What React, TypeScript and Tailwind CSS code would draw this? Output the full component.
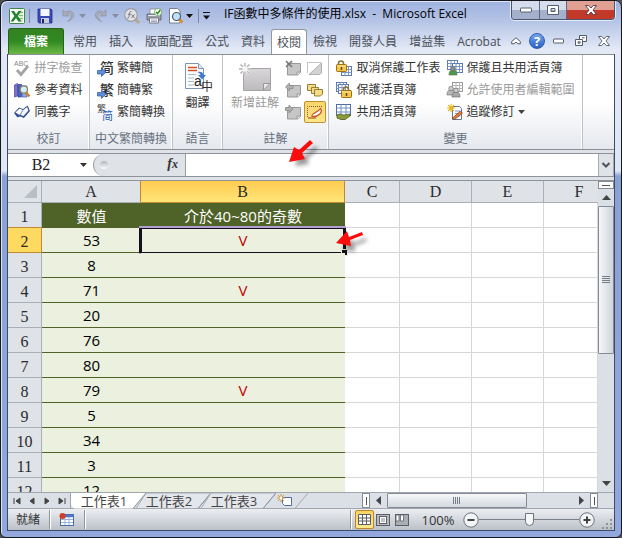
import React from "react";

type Kids = { children?: React.ReactNode };

const Svg = ({ w = 16, h = 16, children }: Kids & { w?: number; h?: number }) => (
  <svg width={w} height={h} viewBox={`0 0 ${w} ${h}`} className="block shrink-0 overflow-visible" aria-hidden="true">
    {children}
  </svg>
);

const Caret = ({ color = "#444" }: { color?: string }) => (
  <Svg w={7} h={4}>
    <path d="M0 0h7L3.5 4z" fill={color} />
  </Svg>
);

/* ---------- quick access icons ---------- */

const ExcelIcon = () => (
  <Svg>
    <rect x="0.5" y="0.5" width="15" height="15" rx="1" fill="#fff" stroke="#3a8a3c" />
    <rect x="9" y="2" width="5" height="12" fill="#dff0da" />
    <path d="M10 4.5h4M10 7.5h4M10 10.500h4" stroke="#7dbb77" />
    <path d="M2 3h3.200l2 3.200L9.500 3h3L8.700 8l4 5.500H9.300L7 9.900 4.500 13.500h-3L5.400 8z" fill="#23852b" />
  </Svg>
);
const SaveIcon = () => (
  <Svg>
    <path d="M1 1h13l1 1v13H2l-1-1z" fill="#3a49b8" stroke="#232f86" strokeWidth="0.8" />
    <rect x="3.500" y="1" width="9" height="7" fill="#f4f7ff" />
    <rect x="4" y="10" width="8" height="5" fill="#c7cce0" />
    <rect x="5" y="11" width="2" height="4" fill="#20264f" />
  </Svg>
);
const UndoIcon = () => (
  <Svg w={14} h={14}>
    <path d="M2 1v6h6L5.800 4.900C8.500 3.300 10.800 5 10 8c-.4 1.600-1.800 3-3.500 4.500C10.500 11 13 8.500 12.600 5.500 12 2 8 .8 4.200 3.300z" fill="#a9adb8" stroke="#8b90a0" strokeWidth="0.700" />
  </Svg>
);
const RedoIcon = () => (
  <Svg w={14} h={14}>
    <path d="M12 1v6H6l2.200-2.100C5.500 3.300 3.200 5 4 8c.4 1.600 1.800 3 3.500 4.500C3.500 11 1 8.500 1.400 5.500 2 2 6 .8 9.800 3.300z" fill="#a9adb8" stroke="#8b90a0" strokeWidth="0.700" />
  </Svg>
);
const FxLensIcon = () => (
  <Svg>
    <path d="M11 11l4 4" stroke="#b5a88e" strokeWidth="3" />
    <circle cx="7" cy="7" r="6.300" fill="#e3e3e6" stroke="#9a9ca4" strokeWidth="1.200" />
    <path d="M7.500 3.500C5.700 3 5.700 4.500 5.300 7S4.700 10.500 3.300 10M3.800 6.200h3M7.500 6.500l3 3.500M10.500 6.500l-3 3.500" stroke="#77797f" fill="none" />
  </Svg>
);
const PrinterIcon = () => (
  <Svg>
    <path d="M4 1h7v6H4z" fill="#fff" stroke="#888" strokeWidth="0.800" />
    <path d="M1 6h14v6H1z" fill="#9aa0ac" stroke="#555b66" strokeWidth="0.800" />
    <path d="M2 7.500h12" stroke="#e7eaf0" />
    <path d="M3.500 10h9v5h-9z" fill="#fff" stroke="#666" strokeWidth="0.800" />
    <path d="M5 12h6M5 13.500h6" stroke="#77a" strokeWidth="0.700" />
    <circle cx="12" cy="4" r="3.600" fill="#fff" stroke="#5a9c4a" strokeWidth="0.700" />
    <path d="M10 4l1.600 1.700L14.300 2" stroke="#2c8a1e" strokeWidth="1.500" fill="none" />
  </Svg>
);
const PreviewIcon = () => (
  <Svg>
    <path d="M1.500.5h8L12 3v12H1.500z" fill="#fff" stroke="#6c7686" strokeWidth="0.900" />
    <path d="M11 11l3.500 3.500" stroke="#d98f2b" strokeWidth="2.800" />
    <circle cx="8.500" cy="8.500" r="4" fill="#bfe0f6" stroke="#4c5a6c" strokeWidth="1.200" />
  </Svg>
);

/* ---------- shared ribbon shapes ---------- */

const GridShape = ({ x, y, gray }: { x: number; y: number; gray?: boolean }) => (
  <g transform={`translate(${x} ${y})`}>
    <rect x="0.500" y="0.500" width="10" height="9" fill="#fff" stroke={gray ? "#999" : "#5d7bb0"} />
    <path d="M.5 3.500h10M.5 6.500h10M4 .5v9M7.500.5v9" stroke={gray ? "#b5b5b5" : "#7c98c6"} />
  </g>
);
const LockShape = ({ x, y }: { x: number; y: number }) => (
  <g transform={`translate(${x} ${y})`}>
    <path d="M2.500 5V3.500a2.500 2.500 0 0 1 5 0V5" fill="none" stroke="#8c7434" strokeWidth="1.600" />
    <rect x="0.500" y="4.500" width="10" height="7" rx="0.800" fill="#f4c74b" stroke="#a07214" />
    <path d="M1.500 6h8" stroke="#fbe7a0" />
    <path d="M5.500 7v3" stroke="#6b4a08" strokeWidth="1.500" />
  </g>
);
const GrayNote = ({ children }: Kids) => (
  <Svg>
    <path d="M2.500 3.500h13v9l-3 2.500h-10z" fill="#c6c6c6" stroke="#999" />
    <path d="M12 15v-3h3.500" fill="#eee" stroke="#999" />
    {children}
  </Svg>
);

const SpellIcon = () => (
  <Svg>
    <text x="0" y="6" fontSize="7" fontFamily="Liberation Sans" fill="#888">ABC</text>
    <path d="M3 10l4 4.500L14 6" stroke="#a4a4a4" strokeWidth="2.800" fill="none" />
  </Svg>
);
const ResearchIcon = () => (
  <Svg>
    <path d="M.5 3l3-1.500V14L.5 15z" fill="#7d73cf" stroke="#4a439c" strokeWidth="0.700" />
    <path d="M4 2.500h3.500V15H4z" fill="#4b63c2" stroke="#2f3f92" strokeWidth="0.700" />
    <path d="M8 4h5v11H8z" fill="#8fa9e0" stroke="#4a62a8" strokeWidth="0.700" />
    <path d="M12 10.500l3.500 4" stroke="#c98324" strokeWidth="2.400" />
    <circle cx="9.800" cy="7.500" r="3.700" fill="#d3f0f8" stroke="#8a7b52" strokeWidth="1.200" />
  </Svg>
);
const BookIcon = () => (
  <Svg>
    <path d="M.5 9L5 4l4 1.500L13.500 2 15.500 7 10 13.500 6 12l-2.500 1z" fill="#33549c" stroke="#1f3668" strokeWidth="0.700" />
    <path d="M1.500 8.500L5.500 4.500l3.200 1.400L5.500 11z" fill="#fff" />
    <path d="M9.200 6l4-3 1.200 3.500L9.500 12l-3-1z" fill="#f2f6ff" />
    <path d="M9 6l-3 5" stroke="#8fa4cc" />
  </Svg>
);
const HanIcon = ({ kind }: { kind: "a" | "b" | "c" }) => (
  <Svg w={17} h={17}>
    {kind === "c" ? (
      <g fontFamily="Noto Sans CJK TC">
        <text x="0" y="8" fontSize="9" fill="#444">繁</text>
        <text x="5" y="16" fontSize="11" fill="#2c5fb4">简</text>
      </g>
    ) : (
      <g>
        <text x="3" y="13" fontSize="14" fontWeight="500" fontFamily="Noto Sans CJK TC" fill="#333">{kind === "a" ? "简" : "繁"}</text>
        <path d="M.5 10.500h4V8l4.500 4.200-4.500 4.300V14h-4z" fill="#5d8fdc" stroke="#2b55a2" strokeWidth="0.700" />
      </g>
    )}
  </Svg>
);
const TranslateIcon = () => (
  <Svg w={26} h={32}>
    <path d="M.5 2.500h13l5 5v20H.5z" fill="#fbfdff" stroke="#7e94b8" />
    <path d="M13.500 2.500v5h5" fill="#dbe6f5" stroke="#7e94b8" />
    <path d="M3 6.500h9M3 9.500h9" stroke="#d8501c" strokeWidth="1.500" />
    <path d="M3 13.500h8M3 17h6M3 20.500h6M3 24h6" stroke="#a5b8d6" />
    <path d="M12 11c4-1 6 0 6.500 3H21l-3.800 4.500L13 14h2.500c-.3-1.500-1.500-2.200-3.500-3z" fill="#3f79cf" />
    <text x="9" y="25" fontSize="14" fontFamily="Liberation Sans" fill="#222">a</text>
    <text x="16" y="30" fontSize="12" fontFamily="Noto Sans CJK TC" fill="#333">中</text>
  </Svg>
);
const NewNoteIcon = () => (
  <Svg w={32} h={28}>
    <defs>
      <linearGradient id="note" x1="0" y1="0" x2="0" y2="1">
        <stop offset="0" stopColor="#d9d7da" />
        <stop offset="1" stopColor="#bdbabe" />
      </linearGradient>
    </defs>
    <path d="M4.500 5.500h27v22h-27z" fill="url(#note)" stroke="#a5a3a6" />
    <path d="M24.500 27v-6.500h6.500z" fill="#e9e9ea" stroke="#98989b" />
    <path d="M6 0v12M0 6h12M1.500 1.500l9 9M10.500 1.500l-9 9" stroke="#f6f6f6" strokeWidth="2.600" />
    <path d="M6 0v3.500M6 8.500V12M0 6h3.500M8.500 6H12M1.500 1.500l2.300 2.300M8.200 8.200l2.300 2.300M10.500 1.500L8.200 3.800M3.800 8.200l-2.300 2.300" stroke="#b4b4b4" strokeWidth="1.400" />
  </Svg>
);
const DeleteNote = () => (
  <GrayNote>
    <path d="M1 1l6 6M7 1L1 7" stroke="#777" strokeWidth="1.700" />
  </GrayNote>
);
const PrevNote = () => (
  <GrayNote>
    <path d="M8 3.500H4.500V1L.5 5l4 4V6.500H8z" fill="#b0b0b0" stroke="#888" strokeWidth="0.800" />
  </GrayNote>
);
const NextNote = () => (
  <GrayNote>
    <path d="M.5 3.500H4V1l4 4-4 4V6.500H.5z" fill="#b0b0b0" stroke="#888" strokeWidth="0.800" />
  </GrayNote>
);
const ToggleNote = () => (
  <Svg>
    <path d="M.5 12.500v-10h13" fill="none" stroke="#888" strokeDasharray="1 1" />
    <path d="M14.500 3v10l-2 1.500H2z" fill="#d3d3d3" stroke="#a2a2a2" strokeWidth="0.800" />
  </Svg>
);
const AllNotes = () => (
  <Svg>
    <g fill="#f3dc8c" stroke="#8e7320" strokeWidth="0.900">
      <path d="M.5 2.500h8v4l-2 2h-6z" />
      <path d="M4.500 5.500h7v4l-2 2h-5z" />
      <path d="M7.500 7.500h8v4.500l-2 2h-6z" />
    </g>
  </Svg>
);
const InkIcon = () => (
  <Svg>
    <path d="M.5 13V2.500h15" fill="none" stroke="#7a6330" strokeDasharray="1 1" />
    <path d="M5 12.500c-1-3 6-4 8.500-8C16 8 12 13 5 12.500z" fill="#fff" stroke="#c9502a" strokeWidth="1.200" />
    <path d="M1 14h8" stroke="#8c4a20" />
  </Svg>
);
const UnprotectIcon = () => (
  <Svg>
    <GridShape x={5} y={6} />
    <LockShape x={0} y={0} />
  </Svg>
);
const ProtectBookIcon = () => (
  <Svg>
    <GridShape x={0} y={0} />
    <GridShape x={2} y={2} />
    <LockShape x={5} y={4} />
  </Svg>
);
const ShareBookIcon = () => (
  <Svg>
    <rect x="0.500" y="0.500" width="14" height="11" fill="#fff" stroke="#4b6da5" />
    <path d="M.5 4h14M.5 8h14M5 .5v11M10 .5v11" stroke="#6f8fc3" />
    <path d="M1 11c3-2 5 0 7 0l6-1v2l-5 3.500H5L1 14z" fill="#8a9c3c" stroke="#4b5c18" strokeWidth="0.800" />
  </Svg>
);
const PersonShape = ({ x, y, c }: { x: number; y: number; c: string }) => (
  <g transform={`translate(${x} ${y})`}>
    <path d="M0 9c0-4 1.500-5 4-5s4 1 4 5z" fill={c} stroke="#666" strokeWidth="0.600" />
    <circle cx="4" cy="2.500" r="2.300" fill={c === "#4a9a3f" ? "#8d8d8d" : "#ccc"} stroke="#666" strokeWidth="0.600" />
  </g>
);
const ProtectShareIcon = () => (
  <Svg>
    <GridShape x={0} y={0} />
    <GridShape x={5} y={3} />
    <PersonShape x={2} y={6} c="#4a9a3f" />
  </Svg>
);
const AllowUsersIcon = () => (
  <Svg>
    <GridShape x={5} y={0} gray />
    <PersonShape x={0} y={4} c="#b9b9b9" />
    <PersonShape x={5} y={6} c="#a8a8a8" />
  </Svg>
);
const TrackIcon = () => (
  <Svg>
    <path d="M5.500 2.500h7l2 2v11h-9z" fill="#fff" stroke="#5f78a6" />
    <path d="M8 7h5M8 9.500h5M8 12h5" stroke="#7c98d0" />
    <path d="M4 0v8M0 4h8M1 1l6 6M7 1L1 7" stroke="#e6b820" strokeWidth="1.100" />
    <path d="M5 14.500L13.500 7l2 2.200L7.500 15.500z" fill="#e27a38" stroke="#7c3d14" strokeWidth="0.700" />
  </Svg>
);

/* ---------- ribbon building blocks ---------- */

const Cmd = ({ icon, label, off, menu }: { icon: React.ReactNode; label: string; off?: boolean; menu?: boolean }) => (
  <button
    type="button"
    disabled={off}
    className={`flex h-[22px] items-center gap-[3px] whitespace-nowrap text-xs leading-[22px] ${off ? "text-[#9a9a9a]" : "text-[#333]"}`}
  >
    <span className="flex w-[17px] shrink-0">{icon}</span>
    {label}
    {menu && <Caret />}
  </button>
);

const Group = ({ title, width, children }: Kids & { title: string; width: string }) => (
  <section
    aria-label={title}
    className={`flex shrink-0 flex-col border-r border-[#bfc3c9] pt-[2px] shadow-[inset_-1px_0_0_#fff] ${width}`}
  >
    <div className="flex h-[72px] justify-center">{children}</div>
    <h2 className="text-center text-xs leading-[20px] text-[#66707e]">{title}</h2>
  </section>
);

const Col = ({ children }: Kids) => <div className="flex flex-col items-start">{children}</div>;

const tabs = ["常用", "插入", "版面配置", "公式", "資料", "校閱", "檢視", "開發人員", "增益集", "Acrobat"];

const rows: [string, string][] = [
  ["53", "V"],
  ["8", ""],
  ["71", "V"],
  ["20", ""],
  ["76", ""],
  ["80", ""],
  ["79", "V"],
  ["5", ""],
  ["34", ""],
  ["3", ""],
  ["12", ""],
];

const TitleBar = () => (
  <header className="flex h-[27px] shrink-0 items-start">
    <div className="flex h-[27px] w-[214px] shrink-0 items-center pb-px pl-px pt-[3px]">
      <ExcelIcon />
      <span className="ml-1 mr-[7px] h-[14px] w-px bg-[#7c88a8]" />
      <button type="button" aria-label="儲存"><SaveIcon /></button>
      <button type="button" aria-label="復原" className="ml-2 flex items-center gap-1"><UndoIcon /><Caret color="#858da3" /></button>
      <button type="button" aria-label="重做" className="ml-2 flex items-center gap-1"><RedoIcon /><Caret color="#858da3" /></button>
      <button type="button" aria-label="函數" className="ml-[5px]"><FxLensIcon /></button>
      <button type="button" aria-label="列印" className="ml-[6px]"><PrinterIcon /></button>
      <button type="button" aria-label="預覽列印" className="ml-[6px] flex items-center gap-[2px]"><PreviewIcon /><Caret color="#111" /></button>
      <span className="ml-[5px] mr-1 h-[14px] w-px bg-[#7c88a8]" />
      <button type="button" aria-label="自訂快速存取工具列">
        <Svg w={7} h={8}><path d="M0 .5h7" stroke="#111" /><path d="M0 3.500h7L3.500 7.500z" fill="#111" /></Svg>
      </button>
    </div>
    <h1 className="min-w-0 flex-1 whitespace-nowrap pl-[2px] text-xs leading-[26px] text-black">
      IF函數中多條件的使用.xlsx&nbsp; - &nbsp;Microsoft Excel
    </h1>
    <div className="-mr-px flex h-[19px] w-[104px] shrink-0 overflow-hidden rounded-b-[4px] border border-t-0 border-[#4a5570] shadow-[0_0_0_1px_#e3eaf7]">
      <button type="button" aria-label="最小化" className="flex w-[28px] items-center justify-center border-r border-[#5d6780] bg-linear-to-b from-[#d5dcec] from-50% to-[#a5b1cc] to-50%">
        <Svg w={12} h={6}><rect x="0.500" y="1" width="11" height="4" rx="0.500" fill="#fff" stroke="#555e70" /></Svg>
      </button>
      <button type="button" aria-label="最大化" className="flex w-[27px] items-center justify-center border-r border-[#5d6780] bg-linear-to-b from-[#d5dcec] from-50% to-[#a5b1cc] to-50%">
        <Svg w={12} h={10}><path d="M.5.5h11v9H.5zM4 3.500h4v3H4z" fill="#fff" fillRule="evenodd" stroke="#555e70" /></Svg>
      </button>
      <button type="button" aria-label="關閉" className="flex flex-1 items-center justify-center bg-linear-to-b from-[#e0a194] from-50% to-[#c2392a] to-50%">
        <Svg w={12} h={10}><path d="M.5.5h3.200L6 3 8.300.5h3.200L8 5l3.500 4.500H8.300L6 7 3.700 9.500H.5L4 5z" fill="#fff" stroke="#55343a" strokeWidth="0.900" /></Svg>
      </button>
    </div>
  </header>
);

const TabRow = () => (
  <nav className="flex h-[26px] shrink-0 items-end">
    <button type="button" className="mr-[3px] h-[26px] w-[56px] shrink-0 rounded-t-[3px] border border-b-0 border-[#23651a] bg-linear-to-b from-[#35801f] via-[#2f8a23] to-[#6cb845] text-xs font-bold leading-[24px] text-white">
      檔案
    </button>
    {tabs.map((t) => (
      <button
        key={t}
        type="button"
        className={`h-[25px] shrink-0 whitespace-nowrap px-[5px] text-xs leading-[22px] text-[#4a4f58] ${
          t === "校閱" ? "relative -mb-px h-[26px] rounded-t-[3px] border border-b-0 border-[#9097a3] bg-white" : "border border-transparent"
        }`}
      >
        {t}
      </button>
    ))}
    <div className="ml-auto flex h-[26px] items-center gap-2 pb-px pr-1">
      <button type="button" aria-label="最小化功能區">
        <Svg w={10} h={8}><path d="M.7 4.500L5 .8l4.300 3.700v2.300H7L5 5 3 6.800H.7z" fill="#fff" stroke="#555d6b" /></Svg>
      </button>
      <button type="button" aria-label="說明" className="size-4 rounded-full border border-[#2c5db0] bg-linear-to-b from-[#75a4ec] to-[#2862c4] text-[13px] font-bold leading-[14px] text-white">?</button>
      <button type="button" aria-label="最小化視窗"><Svg w={12} h={6}><rect x="0.500" y="1" width="10" height="4" rx="0.500" fill="#fff" stroke="#555d6b" /></Svg></button>
      <button type="button" aria-label="還原視窗" className="ml-[2px]">
        <Svg w={13} h={11}><path d="M4.500.5h7v6h-7zM7 2.800h2.500" fill="#fff" stroke="#555d6b" /><path d="M.5 4.500h7v6h-7zM3 6.800h2.200v1.400H3z" fill="#fff" stroke="#555d6b" /></Svg>
      </button>
      <button type="button" aria-label="關閉視窗" className="ml-[2px]">
        <Svg w={12} h={10}><path d="M.5.5h3.200L6 3 8.300.5h3.200L8 5l3.500 4.500H8.300L6 7 3.700 9.500H.5L4 5z" fill="#fff" stroke="#555d6b" strokeWidth="0.900" /></Svg>
      </button>
    </div>
  </nav>
);

const Ribbon = () => (
  <div className="flex h-24 shrink-0 overflow-hidden border-y border-[#8b9097] bg-linear-to-b from-white from-50% to-[#e5e8ed]">
    <Group title="校訂" width="w-[82px]">
      <Col>
        <Cmd icon={<SpellIcon />} label="拼字檢查" off />
        <Cmd icon={<ResearchIcon />} label="參考資料" />
        <Cmd icon={<BookIcon />} label="同義字" />
      </Col>
    </Group>
    <Group title="中文繁簡轉換" width="w-[83px]">
      <Col>
        <Cmd icon={<HanIcon kind="a" />} label="繁轉簡" />
        <Cmd icon={<HanIcon kind="b" />} label="簡轉繁" />
        <Cmd icon={<HanIcon kind="c" />} label="繁簡轉換" />
      </Col>
    </Group>
    <Group title="語言" width="w-[50px]">
      <button type="button" className="flex flex-col items-center pt-1 text-xs leading-[20px] text-[#333]">
        <TranslateIcon />
        翻譯
      </button>
    </Group>
    <Group title="註解" width="w-[106px]">
      <div className="flex pl-[6px]">
        <button type="button" disabled className="flex flex-col items-center pt-[6px] text-xs leading-[20px] text-[#9a9a9a]">
          <NewNoteIcon />
          <span className="pt-[2px]">新增註解</span>
        </button>
        <div className="ml-[5px] grid grid-cols-[18px_22px] grid-rows-[22px_22px_22px] place-items-center gap-x-[2px]">
          <button type="button" disabled aria-label="刪除"><DeleteNote /></button>
          <button type="button" disabled aria-label="顯示/隱藏註解"><ToggleNote /></button>
          <button type="button" disabled aria-label="上一個"><PrevNote /></button>
          <button type="button" aria-label="顯示所有註解"><AllNotes /></button>
          <button type="button" disabled aria-label="下一個"><NextNote /></button>
          <button type="button" aria-label="顯示筆跡" className="flex size-[22px] items-center justify-center rounded-[2px] border border-[#c1932f] bg-linear-to-b from-[#fbd46a] to-[#fde68c]">
            <InkIcon />
          </button>
        </div>
      </div>
    </Group>
    <Group title="變更" width="w-[254px]">
      <div className="flex gap-[6px]">
        <Col>
          <Cmd icon={<UnprotectIcon />} label="取消保護工作表" />
          <Cmd icon={<ProtectBookIcon />} label="保護活頁簿" />
          <Cmd icon={<ShareBookIcon />} label="共用活頁簿" />
        </Col>
        <Col>
          <Cmd icon={<ProtectShareIcon />} label="保護且共用活頁簿" />
          <Cmd icon={<AllowUsersIcon />} label="允許使用者編輯範圍" off />
          <Cmd icon={<TrackIcon />} label="追蹤修訂" menu />
        </Col>
      </div>
    </Group>
  </div>
);

const FormulaBar = () => (
  <div className="my-[3px] flex h-6 shrink-0 border-y border-[#8e939b] bg-white">
    <input aria-label="名稱方塊" defaultValue="B2" className="w-[66px] shrink-0 bg-white text-center font-['Liberation_Serif',serif] text-base leading-[22px] text-[#222] outline-none" />
    <button type="button" aria-label="名稱清單" className="flex w-[19px] shrink-0 items-center justify-center"><Caret color="#333" /></button>
    <div className="flex w-[93px] shrink-0 items-center justify-between rounded-l-full border-l border-r border-[#9a9fa7] bg-[#dfe2e7] pl-[6px] pr-[7px]">
      <span className="size-2 rounded-full bg-linear-to-b from-[#b2b6bd] to-white" />
      <button type="button" aria-label="插入函數" className="pb-[2px] font-['Liberation_Serif',serif] text-sm font-bold italic leading-[20px] text-[#333]">
        f<span className="text-xs">x</span>
      </button>
    </div>
    <input aria-label="資料編輯列" className="min-w-0 flex-1 bg-white px-1 text-sm outline-none" />
    <button type="button" aria-label="展開資料編輯列" className="flex w-4 shrink-0 items-center justify-center border border-y-0 border-[#a5abb3] bg-[#dfe2e7]">
      <Svg w={8} h={6}><path d="M.5 1L4 4.500 7.500 1" fill="none" stroke="#4d525a" strokeWidth="2" /></Svg>
    </button>
  </div>
);

const Sheet = () => (
  <div className="min-h-0 min-w-0 flex-1 overflow-hidden bg-white">
    <table className="w-full table-fixed border-separate border-spacing-0 text-center">
      <colgroup>
        <col className="w-[34px]" />
        <col className="w-[99px]" />
        <col className="w-[204px]" />
        <col className="w-[55px]" />
        <col className="w-[72px]" />
        <col className="w-[72px]" />
        <col />
      </colgroup>
      <thead>
        <tr className="h-[22px] font-['Liberation_Serif',serif] text-base leading-[20px] text-[#2b2b2b]">
          <td className="border-b border-r border-[#a9afb7] bg-[#dfe2e7] p-0">
            <span className="flex justify-end pr-1"><Svg w={13} h={13}><path d="M13 0v13H0z" fill="#b9bec5" /></Svg></span>
          </td>
          {["A", "B", "C", "D", "E", "F"].map((c) => (
            <th
              key={c}
              scope="col"
              className={`border-b p-0 pt-px font-normal ${
                c === "B" ? "border-r border-[#c28a30] bg-linear-to-b from-[#ffcb4f] to-[#ffe678]" : "border-[#a9afb7] bg-[#dfe2e7]"
              } ${c === "A" ? "border-r border-r-[#c28a30]" : c === "F" ? "pl-4" : "border-r"}`}
            >
              {c}
            </th>
          ))}
        </tr>
      </thead>
      <tbody className="text-[15px] leading-[24px]">
        <tr className="h-[25px]">
          <th scope="row" className="border-b border-r border-[#a9afb7] border-b-[#c28a30] bg-[#dfe2e7] p-0 pt-1 font-['Liberation_Serif',serif] text-base font-normal leading-[20px] text-[#2b2b2b]">1</th>
          <th scope="col" className="bg-[#4f6228] p-0 font-normal text-white">數值</th>
          <th scope="col" className="bg-[#4f6228] p-0 font-normal text-white">介於40~80的奇數</th>
          {[0, 1, 2, 3].map((i) => (
            <td key={i} className="border-b border-r border-[#d5d7da] p-0" />
          ))}
        </tr>
        {rows.map(([a, b], i) => (
          <tr key={i} className="h-[25px]">
            <th
              scope="row"
              className={`border-b border-r p-0 pt-1 font-['Liberation_Serif',serif] text-base font-normal leading-[20px] text-[#2b2b2b] ${
                i === 0 ? "border-[#c28a30] bg-[#ffd960]" : "border-[#a9afb7] bg-[#dfe2e7]"
              }`}
            >
              {i + 2}
            </th>
            <td className="border-b border-[#4f6228] bg-[#ebf1de] p-0 text-black">{a}</td>
            <td className="relative border-b border-[#4f6228] bg-[#ebf1de] p-0 text-[#c00000]">
              {b}
              {i === 0 && (
                <span className="absolute -bottom-[2px] -left-[2px] -right-px -top-[2px] border-2 border-[#b09ed0]">
                  <span className="absolute -inset-x-[2px] -bottom-px top-0 border-x-3 border-y border-[#14101e]" />
                  <span className="absolute -bottom-[3px] -right-[3px] size-[5px] bg-[#14101e] ring-1 ring-[#ebf1de]" />
                </span>
              )}
            </td>
            {[0, 1, 2, 3].map((k) => (
              <td key={k} className="border-b border-r border-[#d5d7da] p-0" />
            ))}
          </tr>
        ))}
      </tbody>
    </table>
  </div>
);

const VerticalScroll = () => (
  <div className="flex w-4 shrink-0 flex-col bg-[#dbdfe6]">
    <div className="flex h-2 items-center justify-center border border-[#868b94] bg-white"><span className="h-px w-2 bg-[#555]" /></div>
    <button type="button" aria-label="向上捲動" className="flex h-[17px] items-center justify-center"><Svg w={9} h={5}><path d="M4.500 0L9 5H0z" fill="#444" /></Svg></button>
    <div className="min-h-0 flex-1">
      <div className="flex h-[55%] flex-col items-center justify-center gap-px rounded-[1px] border border-[#858b95] bg-linear-to-r from-[#f6f7f9] to-[#cfd4dc]">
        {[0, 1, 2, 3].map((i) => <span key={i} className="h-px w-2 bg-[#777d87]" />)}
      </div>
    </div>
    <button type="button" aria-label="向下捲動" className="flex h-[17px] items-center justify-center"><Svg w={9} h={5}><path d="M4.500 5L9 0H0z" fill="#444" /></Svg></button>
  </div>
);

const NavArrow = ({ d, label }: { d: string; label: string }) => (
  <button type="button" aria-label={label} className="flex w-[15px] items-center justify-center">
    <Svg w={8} h={8}><path d={d} fill="#444" stroke="#444" strokeWidth="1" /></Svg>
  </button>
);

const SheetTab = ({ label, active }: { label: React.ReactNode; active?: boolean }) => (
  <button type="button" className={`relative -mr-[10px] flex h-4 w-[75px] items-center justify-center pr-[9px] text-[13px] leading-[15px] text-[#444] ${active ? "z-10" : ""}`}>
    <svg viewBox="0 0 75 16" preserveAspectRatio="none" className="absolute inset-0 size-full" aria-hidden="true">
      <path d={active ? "M0 0H75L62 15.500H3L0 12z" : "M10 0H75L62 15.500H0z"} fill={active ? "#fff" : "#e3e6eb"} stroke={active ? "none" : "#a5abb3"} />
      <path d="M75 0L62 15.500" stroke="#8e949e" />
    </svg>
    <span className="relative">{label}</span>
  </button>
);

const Splitter = () => (
  <span className="flex w-2 shrink-0 items-center justify-center border border-[#868b94] bg-white"><span className="h-2 w-px bg-[#555]" /></span>
);

const SheetTabs = () => (
  <div className="flex h-[17px] shrink-0 border-y border-[#a0a6af] bg-[#dbdfe6]">
    <div className="flex w-[63px] shrink-0 border-r border-[#a0a6af] pl-px">
      <NavArrow label="第一張" d="M1 1v6M7 1v6L3 4z" />
      <NavArrow label="上一張" d="M6 1v6L2 4z" />
      <NavArrow label="下一張" d="M2 1v6l4-3z" />
      <NavArrow label="最後一張" d="M7 1v6M1 1v6l4-3z" />
    </div>
    <div className="flex min-w-0 flex-1">
      <SheetTab label="工作表1" active />
      <SheetTab label="工作表2" />
      <SheetTab label="工作表3" />
      <button type="button" aria-label="插入工作表" className="ml-[11px] flex items-center">
        <Svg w={30} h={16}>
          <path d="M5.500 4.500h9v8h-7l-2-2z" fill="#fff" stroke="#4f6ca4" />
          <path d="M4 1v8M0 5h8M1.200 2.200l5.600 5.600M6.800 2.200L1.200 7.800" stroke="#d88f22" />
          <circle cx="4" cy="5" r="1.500" fill="#fff" />
          <path d="M31 0L18 15.500" stroke="#a5abb3" />
        </Svg>
      </button>
    </div>
    <div className="flex w-[252px] shrink-0">
      <Splitter />
      <button type="button" aria-label="向左捲動" className="flex w-[17px] items-center justify-center"><Svg w={5} h={9}><path d="M5 0v9L0 4.500z" fill="#444" /></Svg></button>
      <div className="min-w-0 flex-1">
        <div className="flex h-full w-3/4 items-center justify-center gap-px rounded-[1px] border border-[#858b95] bg-linear-to-b from-[#f6f7f9] to-[#d3d8df]">
          {[0, 1, 2, 3].map((i) => <span key={i} className="h-[7px] w-px bg-[#777d87]" />)}
        </div>
      </div>
      <button type="button" aria-label="向右捲動" className="flex w-[17px] items-center justify-center"><Svg w={5} h={9}><path d="M0 0v9l5-4.500z" fill="#444" /></Svg></button>
      <Splitter />
      <span className="w-4 shrink-0" />
    </div>
  </div>
);

const StatusSep = () => <span className="h-[19px] w-px bg-[#8f959e] shadow-[1px_0_0_#fff]" />;

const StatusBar = () => (
  <footer className="flex h-[21px] shrink-0 items-center bg-linear-to-b from-[#eceef1] to-[#bcc1c9] text-xs leading-[20px] text-[#333]">
    <span className="w-[41px] pl-2">就緒</span>
    <StatusSep />
    <button type="button" aria-label="錄製巨集" className="px-[9px]">
      <Svg>
        <rect x="1.500" y="2.500" width="13" height="11" fill="#fff" stroke="#4a6cae" />
        <path d="M1.500 4h13" stroke="#4a78d0" strokeWidth="2.500" />
        <path d="M2 7.500h12M2 10.500h12M6 5v8M10 5v8" stroke="#9cb3dc" />
        <circle cx="3.500" cy="4" r="3" fill="#d23c28" />
      </Svg>
    </button>
    <StatusSep />
    <div className="ml-auto flex items-center">
      <StatusSep />
      <button type="button" aria-label="標準模式" className="ml-1 flex size-[19px] items-center justify-center rounded-[2px] border border-[#c1872b] bg-linear-to-b from-[#fbd262] to-[#ffea8c]">
        <Svg w={13} h={11}><path d="M.5.5h12v10H.5zM.5 4h12M.5 7h12M4.500.5v10M8.500.5v10" fill="#fff" stroke="#5d5f66" /></Svg>
      </button>
      <button type="button" aria-label="整頁模式" className="ml-[2px]">
        <Svg w={14} h={12}><rect x="0.500" y="0.500" width="13" height="11" fill="#b6b9bf" stroke="#5d5f66" /><rect x="3.500" y="2.500" width="7" height="7" fill="#fff" stroke="#5d5f66" /><path d="M5 5h4M5 7h4" stroke="#888" /></Svg>
      </button>
      <button type="button" aria-label="分頁預覽" className="ml-[5px]">
        <Svg w={14} h={12}><rect x="0.500" y="0.500" width="13" height="11" fill="#a9adb4" stroke="#5d5f66" /><path d="M1 1h3v6H1zM5.500 1h3v6h-3z" fill="#fff" stroke="#5d5f66" strokeWidth="0.800" /></Svg>
      </button>
      <button type="button" className="w-[54px] pl-1 text-center text-[13px]">100%</button>
      <button type="button" aria-label="縮小"><Svg><circle cx="8" cy="8" r="7.200" fill="#f3f4f6" stroke="#6d727b" /><path d="M4.500 8h7" stroke="#444" strokeWidth="2" /></Svg></button>
      <input
        type="range"
        aria-label="顯示比例"
        defaultValue={50}
        className="h-4 w-[100px] appearance-none bg-transparent [&::-webkit-slider-runnable-track]:h-px [&::-webkit-slider-runnable-track]:bg-[#7b818b] [&::-webkit-slider-thumb]:-mt-[6px] [&::-webkit-slider-thumb]:h-[13px] [&::-webkit-slider-thumb]:w-[9px] [&::-webkit-slider-thumb]:appearance-none [&::-webkit-slider-thumb]:rounded-b-[5px] [&::-webkit-slider-thumb]:border [&::-webkit-slider-thumb]:border-[#6d727b] [&::-webkit-slider-thumb]:bg-[#f6f7f9]"
      />
      <button type="button" aria-label="放大"><Svg><circle cx="8" cy="8" r="7.200" fill="#f3f4f6" stroke="#6d727b" /><path d="M4.500 8h7M8 4.500v7" stroke="#444" strokeWidth="2" /></Svg></button>
      <span className="ml-[6px] self-end pr-px">
        <Svg w={12} h={12}><path d="M9 1h2v2H9zM9 5h2v2H9zM5 5h2v2H5zM9 9h2v2H9zM5 9h2v2H5zM1 9h2v2H1z" fill="#8d939d" /></Svg>
      </span>
    </div>
  </footer>
);

const Arrow = ({ place, d, shade }: { place: string; d: string; shade: string }) => (
  <svg width="40" height="34" viewBox="0 0 40 34" className={`pointer-events-none absolute z-20 ${place}`} aria-hidden="true">
    <path d={shade} fill="#000" opacity="0.400" className="blur-[2px]" />
    <path d={d} fill="#fb0d0d" />
  </svg>
);

export default function App() {
  return (
    <div className="h-screen bg-[#4c4f55] font-['Open_Sans','Noto_Sans_CJK_TC',sans-serif]">
      <div className="flex h-full flex-col overflow-hidden rounded-t-[7px] rounded-b-[6px] border border-[#15181f] bg-[linear-gradient(180deg,#9fb3df_0,#b4c3e6_20px,#e3e9f5_48px,#dfe6f4_170px,#8aa1d4_175px,#92a8dc_100%)] px-[6px] pb-[6px] shadow-[inset_1px_1px_0_#dce5f7]">
        <div className="px-px">
          <TitleBar />
          <TabRow />
        </div>
        <main className="relative flex min-h-0 flex-1 flex-col border-x border-b border-[#3d4b6b] bg-[#dfe2e7]">
          <Ribbon />
          <FormulaBar />
          <div className="flex min-h-0 flex-1 border-t border-[#8e939b]">
            <Sheet />
            <VerticalScroll />
          </div>
          <SheetTabs />
          <StatusBar />
          <Arrow
            place="left-[278px] top-[84px]"
            d="M24 2l3 3-11 10 3 6L3 24 8 9l5 3z"
            shade="M29 8l3 3-11 10 2 5L9 28l4-13 6 3z"
          />
          <Arrow
            place="left-[325px] top-[174px]"
            d="M29 4l1 3-13 5 1 6L3 15 14 3l2 6z"
            shade="M33 10l1 3-13 5 1 6L9 21 18 10l2 5z"
          />
        </main>
      </div>
    </div>
  );
}
